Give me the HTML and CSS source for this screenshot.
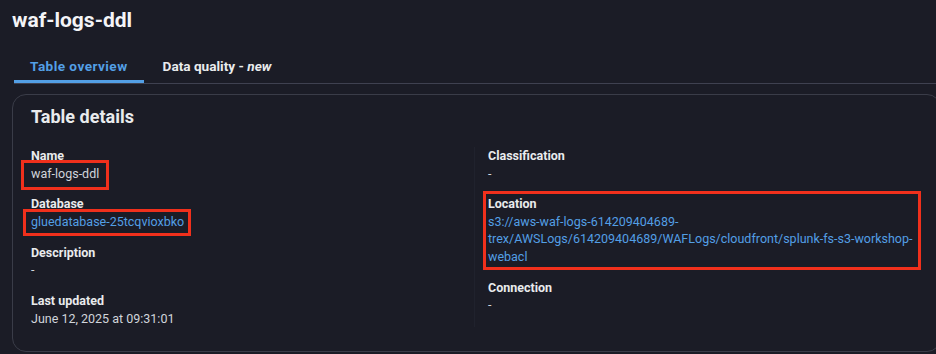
FILE: index.html
```html
<!DOCTYPE html>
<html lang="en">
<head>
    <meta charset="UTF-8">
    <meta name="viewport" content="width=device-width, initial-scale=1.0">
    <title>waf-logs-ddl</title>
    <link rel="stylesheet" href="styles.css">
</head>
<body>
    <div class="page">
        <h1 class="page-title">waf-logs-ddl</h1>

        <div class="tabs">
            <a class="tab tab-active">Table overview</a>
            <a class="tab">Data quality - <em>new</em></a>
        </div>

        <section class="card">
            <h2 class="card-title">Table details</h2>

            <div class="details">
                <div class="col">
                    <div class="pair">
                        <div class="label">Name</div>
                        <div class="value"><span class="marked marked-name">waf-logs-ddl</span></div>
                    </div>
                    <div class="pair">
                        <div class="label">Database</div>
                        <div class="value"><a class="link marked marked-db">gluedatabase-25tcqvioxbko</a></div>
                    </div>
                    <div class="pair">
                        <div class="label">Description</div>
                        <div class="value">-</div>
                    </div>
                    <div class="pair">
                        <div class="label">Last updated</div>
                        <div class="value">June 12, 2025 at 09:31:01</div>
                    </div>
                </div>

                <div class="col col-right">
                    <div class="pair">
                        <div class="label">Classification</div>
                        <div class="value">-</div>
                    </div>
                    <div class="pair marked marked-location">
                        <div class="label">Location</div>
                        <div class="value"><a class="link">s3://aws-waf-logs-614209404689-trex/AWSLogs/614209404689/WAFLogs/cloudfront/splunk-fs-s3-workshop-webacl</a></div>
                    </div>
                    <div class="pair">
                        <div class="label">Connection</div>
                        <div class="value">-</div>
                    </div>
                </div>
            </div>
        </section>
    </div>
</body>
</html>
```

FILE: styles.css
```css
html, body {
    margin: 0;
    padding: 0;
    background-color: #1b1c26;
    overflow: hidden;
}
body {
    font-family: Roboto, "Open Sans", sans-serif;
    color: #d1d5db;
}
.page {
    padding-left: 12px;
}
.page-title {
    margin: 6px 0 13px;
    font-size: 21px;
    line-height: 28px;
    font-weight: bold;
    color: #f4f4f7;
}

/* tabs */
.tabs {
    display: flex;
    gap: 3px;
    margin-left: 2px;
    border-bottom: 1px solid #3f4150;
}
.tab {
    padding: 11px 16px 5px;
    font-size: 13.6px;
    line-height: 17px;
    font-weight: bold;
    color: #e9ebed;
    border-bottom: 3px solid transparent;
}
.tab-active {
    letter-spacing: 0.45px;
    color: #539fe5;
    border-bottom-color: #539fe5;
}

/* card */
.card {
    width: 891px;
    margin-top: 10px;
    padding: 11px 18px 24px;
    border: 1px solid #3a3c48;
    border-radius: 14px;
}
.card-title {
    margin: 0 0 19px;
    font-size: 18px;
    line-height: 22px;
    font-weight: bold;
    color: #e9ebed;
}
.details {
    display: grid;
    grid-template-columns: 443px 1fr;
}
.col {
    display: flex;
    flex-direction: column;
    gap: 13.4px;
}
.col-right {
    border-left: 1px solid #20222d;
    padding-left: 13px;
    padding-right: 1px;
}
.label {
    font-size: 12.5px;
    line-height: 17.6px;
    font-weight: bold;
    color: #e9ebed;
}
.value {
    font-size: 12.5px;
    line-height: 17.4px;
    color: #d1d5db;
}
.link {
    color: #539fe5;
}

/* red annotation boxes */
.marked {
    position: relative;
    display: inline-block;
}
.marked::after {
    content: "";
    position: absolute;
    border: 3px solid #f0301c;
}
.marked-name::after {
    top: -5px;
    bottom: -8px;
    left: -10px;
    right: -10px;
}
.marked-db::after {
    top: -4px;
    bottom: -6px;
    left: -8px;
    right: -7px;
}
.marked-location {
    display: block;
}
.marked-location::after {
    top: -4px;
    bottom: -5px;
    left: -5px;
    right: 0;
}
```
